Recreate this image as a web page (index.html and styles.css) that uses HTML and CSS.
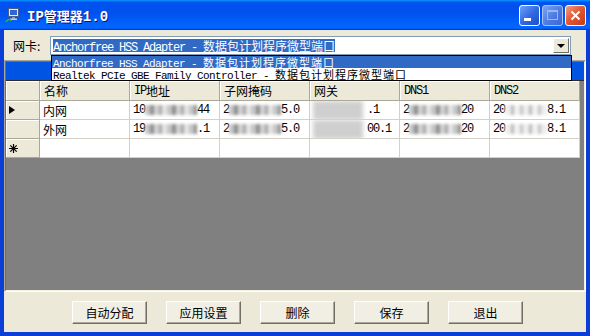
FILE: index.html
```html
<!DOCTYPE html>
<html>
<head>
  <meta charset="utf-8">
  <title>IP管理器1.0</title>
  <link rel="stylesheet" href="styles.css">
</head>
<body>
  <div class="window">
    <!-- Title Bar -->
    <div class="titlebar">
      <svg class="app-icon" width="16" height="16" viewBox="0 0 16 16">
        <rect x="3.5" y="1.5" width="10" height="8" fill="#e9ecf2" stroke="#4b5d86"/>
        <rect x="5" y="3" width="7" height="5" fill="#2d67d6"/>
        <rect x="7" y="10" width="3" height="2" fill="#8a97b0"/>
        <rect x="5" y="11.5" width="7" height="1.5" fill="#c9ced8"/>
        <path d="M1 15 C3 11.5 5 12 6.5 14" stroke="#2fb52f" stroke-width="1.6" fill="none"/>
      </svg>
      <span class="title"><span class="mono">IP</span>管理器<span class="mono">1.0</span></span>
      <div class="title-buttons">
        <div class="tb-btn tb-min"><span></span></div>
        <div class="tb-btn tb-max"><span></span></div>
        <div class="tb-btn tb-close">
          <svg width="11" height="11" viewBox="0 0 11 11">
            <path d="M1.5 1.5 L9.5 9.5 M9.5 1.5 L1.5 9.5" stroke="#fff" stroke-width="2"/>
          </svg>
        </div>
      </div>
    </div>

    <div class="frame">
      <div class="client">
        <!-- Adapter Selector -->
        <div class="nic-row">
          <span class="nic-label">网卡:</span>
          <div class="combo">
            <span class="combo-text"><span class="mono">Anchorfree HSS Adapter - </span>数据包计划程序微型端口</span>
            <div class="combo-btn"></div>
          </div>
        </div>

        <!-- Data Grid -->
        <div class="grid">
          <div class="grid-inner">
            <div class="caption"></div>
            <div class="table">
              <div class="rh"></div>
              <div class="hd">名称</div>
              <div class="hd"><span class="mono">IP</span>地址</div>
              <div class="hd">子网掩码</div>
              <div class="hd">网关</div>
              <div class="hd"><span class="mono">DNS1</span></div>
              <div class="hd"><span class="mono">DNS2</span></div>

              <div class="rh"><span class="current"></span></div>
              <div class="cell">内网</div>
              <div class="cell"><span class="mono">10</span><span class="blur"></span><span class="mono">44</span></div>
              <div class="cell"><span class="mono">2</span><span class="blur"></span><span class="mono">5.0</span></div>
              <div class="cell"><span class="smudge"></span><span class="mono">.1</span></div>
              <div class="cell"><span class="mono">2</span><span class="blur"></span><span class="mono">20</span></div>
              <div class="cell"><span class="mono">20</span><span class="blur light"></span><span class="mono">8.1</span></div>

              <div class="rh"></div>
              <div class="cell">外网</div>
              <div class="cell"><span class="mono">19</span><span class="blur"></span><span class="mono">.1</span></div>
              <div class="cell"><span class="mono">2</span><span class="blur"></span><span class="mono">5.0</span></div>
              <div class="cell"><span class="smudge"></span><span class="mono">00.1</span></div>
              <div class="cell"><span class="mono">2</span><span class="blur"></span><span class="mono">20</span></div>
              <div class="cell"><span class="mono">20</span><span class="blur light"></span><span class="mono">8.1</span></div>

              <div class="rh">
                <svg width="9" height="9" viewBox="0 0 9 9">
                  <path d="M4.5 0 V9 M0 4.5 H9 M1.3 1.3 L7.7 7.7 M7.7 1.3 L1.3 7.7" stroke="#000" stroke-width="1.2"/>
                </svg>
              </div>
              <div class="cell"></div>
              <div class="cell"></div>
              <div class="cell"></div>
              <div class="cell"></div>
              <div class="cell"></div>
              <div class="cell"></div>
            </div>
          </div>
        </div>

        <!-- Actions -->
        <div class="actions">
          <button class="btn">自动分配</button>
          <button class="btn">应用设置</button>
          <button class="btn">删除</button>
          <button class="btn">保存</button>
          <button class="btn">退出</button>
        </div>
      </div>
    </div>

    <!-- Open dropdown list -->
    <div class="droplist">
      <div class="opt sel"><span class="mono">Anchorfree HSS Adapter - </span>数据包计划程序微型端口</div>
      <div class="opt"><span class="mono">Realtek PCIe GBE Family Controller - </span>数据包计划程序微型端口</div>
    </div>
  </div>
</body>
</html>
```

FILE: styles.css
```css
* {
  box-sizing: border-box;
}

body {
  margin: 0;
  font-family: "Noto Sans CJK SC", sans-serif;
  font-size: 12px;
  color: #000;
}

.mono {
  font-family: "Liberation Mono", "Noto Sans CJK SC", monospace;
  font-size: 12px;
  letter-spacing: -1.2px;
  white-space: pre;
}

.window {
  position: relative;
  width: 590px;
  height: 336px;
  display: flex;
  flex-direction: column;
}

/* title bar */
.titlebar {
  height: 30px;
  display: flex;
  align-items: center;
  padding: 0 4px 0 5px;
  background: linear-gradient(180deg, #0997ff, #0053ee 8%, #0050ee 40%, #06f 88%, #06f 93%, #005bff 95%, #003dd7 96%, #003dd7);
  color: #fff;
}

.title {
  margin-left: 6px;
  font-size: 13px;
  font-weight: bold;
  text-shadow: 1px 1px #0f1089;
}

.title .mono {
  font-size: 14px;
  letter-spacing: 0;
  font-weight: bold;
}

.title-buttons {
  margin-left: auto;
  display: flex;
  gap: 2px;
}

.tb-btn {
  width: 21px;
  height: 21px;
  border: 1px solid #fff;
  border-radius: 3px;
  display: flex;
}

.tb-min {
  background: linear-gradient(135deg, #6ea0f8, #2f66e0 55%, #1d4fcc);
  align-items: flex-end;
  padding: 0 0 4px 4px;
}

.tb-min span {
  width: 7px;
  height: 3px;
  background: #fff;
}

.tb-max {
  background: linear-gradient(135deg, #7aa4f2, #4a78e0 60%, #3c68d6);
  border-color: #a9c1f0;
  align-items: center;
  justify-content: center;
}

.tb-max span {
  width: 11px;
  height: 10px;
  border: 1px solid #9bb6ee;
  border-top-width: 2px;
}

.tb-close {
  background: linear-gradient(135deg, #f0a088, #e35a33 45%, #c7381a);
  align-items: center;
  justify-content: center;
}

/* frame and client area */
.frame {
  flex: 1;
  display: flex;
  border: 4px solid #0a3ed6;
  border-top: none;
}

.client {
  flex: 1;
  background: #ece9d8;
  display: flex;
  flex-direction: column;
}

.nic-row {
  display: flex;
  align-items: center;
  height: 19px;
  margin-top: 6px;
  padding-left: 9px;
}

.nic-label {
  width: 37px;
}

.combo {
  width: 521px;
  height: 19px;
  border: 1px solid #7f9db9;
  background: #fff;
  display: flex;
  align-items: center;
  padding: 0 1px 0 2px;
}

.combo-text {
  background: #316ac5;
  color: #fff;
  height: 13px;
  line-height: 13px;
}

.combo-btn {
  margin-left: auto;
  width: 16px;
  height: 15px;
  background: #ece9d8;
  border: 1px solid;
  border-color: #fff #716f64 #716f64 #fff;
  display: flex;
  align-items: center;
  justify-content: center;
}

.combo-btn::before {
  content: "";
  border-left: 4px solid transparent;
  border-right: 4px solid transparent;
  border-top: 4px solid #000;
}

/* grid */
.grid {
  margin-top: 5px;
  height: 232px;
  border: 1px solid;
  border-color: #aca899 #fff #fff #aca899;
}

.grid-inner {
  height: 100%;
  border: 1px solid;
  border-color: #716f64 #f1efe2 #f1efe2 #716f64;
  background: #808080;
}

.caption {
  height: 19px;
  background: #0054e3;
  border-bottom: 1px solid #2b2b2b;
}

.table {
  display: grid;
  grid-template-columns: 34px repeat(6, 90px);
  grid-template-rows: 20px repeat(3, 19px);
}

.hd, .rh {
  background: #ece9d8;
  border-right: 1px solid #aca899;
  border-bottom: 1px solid #aca899;
  box-shadow: inset 1px 1px #fff;
  display: flex;
  align-items: center;
}

.hd {
  padding-left: 4px;
}

.rh {
  padding-left: 3px;
}

.cell {
  background: #fff;
  border-right: 1px solid #d4d0c8;
  border-bottom: 1px solid #d4d0c8;
  display: flex;
  align-items: center;
  padding-left: 3px;
  white-space: nowrap;
  overflow: hidden;
}

.current {
  border-left: 6px solid #000;
  border-top: 4.5px solid transparent;
  border-bottom: 4.5px solid transparent;
}

.blur {
  width: 52px;
  height: 10px;
  background: repeating-linear-gradient(90deg, #c6c6c6 0 5px, #8f8f8f 5px 9px, #d2d2d2 9px 14px, #a8a8a8 14px 17px, #e4e4e4 17px 22px);
  filter: blur(1.6px);
}

.blur.light {
  width: 42px;
  background: repeating-linear-gradient(90deg, #eeeeee 0 6px, #b8b8b8 6px 9px, #f2f2f2 9px 15px, #c4c4c4 15px 18px);
}

.smudge {
  width: 50px;
  height: 19px;
  margin-right: 4px;
  background: #cfcfcf;
  filter: blur(2px);
}

/* buttons */
.actions {
  display: flex;
  gap: 19px;
  margin-top: 9px;
  padding-left: 68px;
}

.btn {
  width: 75px;
  height: 23px;
  padding: 0;
  font-family: "Noto Sans CJK SC", sans-serif;
  font-size: 12px;
  color: #000;
  background: #f1efe4;
  border: 1px solid;
  border-color: #fff #716f64 #716f64 #fff;
  box-shadow: inset -1px -1px #aca899;
}

/* open combo list */
.droplist {
  position: absolute;
  left: 51px;
  top: 55px;
  width: 521px;
  height: 26px;
  border: 1px solid #000;
  background: #fff;
}

.opt {
  height: 12px;
  line-height: 12px;
  padding-left: 1px;
  white-space: nowrap;
  font-size: 11px;
  letter-spacing: 1px;
}

.opt .mono {
  font-size: 11px;
  letter-spacing: -0.6px;
}

.opt.sel {
  background: #316ac5;
  color: #fff;
}
```
